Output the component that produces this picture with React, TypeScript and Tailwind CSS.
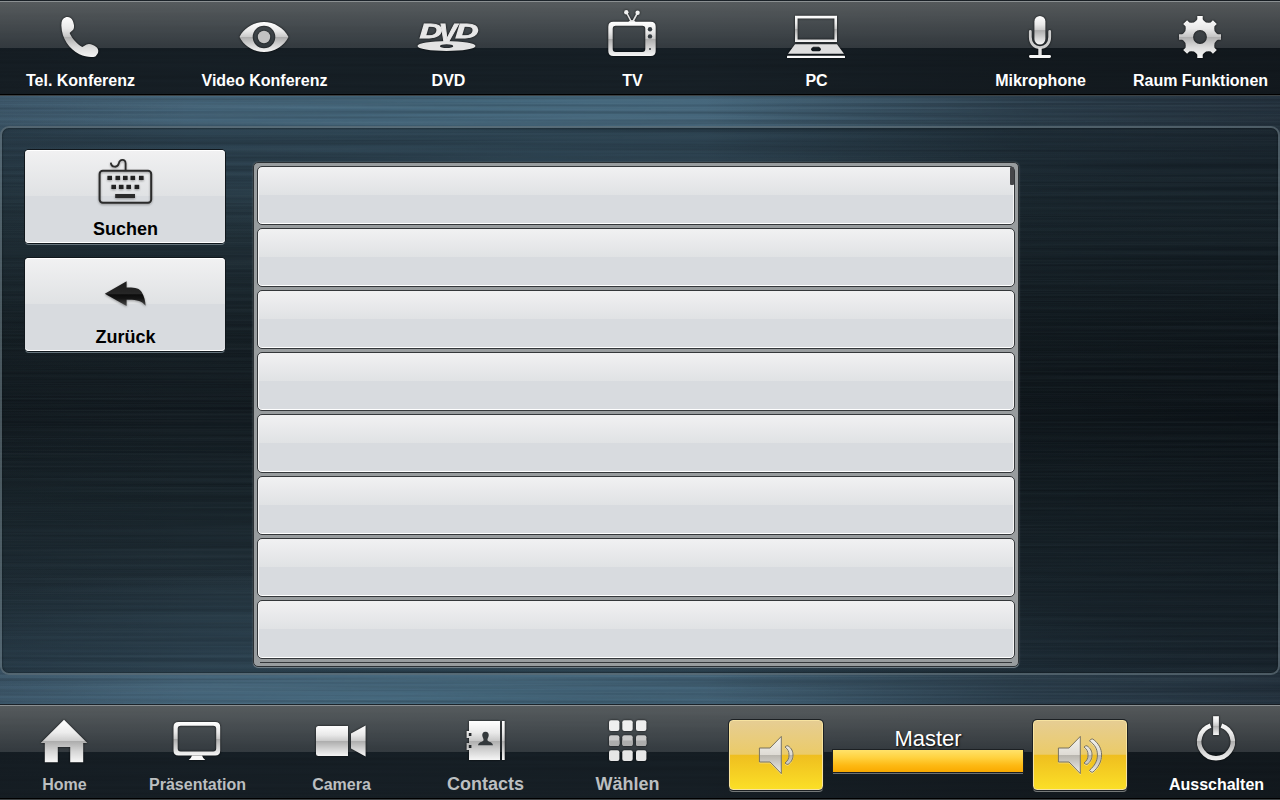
import type { ReactNode } from "react";

function Defs() {
  return (
    <svg className="absolute h-0 w-0" aria-hidden="true">
      <defs>
        <linearGradient id="metal" x1="0" y1="0" x2="0" y2="1">
          <stop offset="0" stopColor="#ffffff" />
          <stop offset="0.3" stopColor="#e9e9e9" />
          <stop offset="0.5" stopColor="#c9c9c9" />
          <stop offset="0.51" stopColor="#adadad" />
          <stop offset="0.75" stopColor="#d2d2d2" />
          <stop offset="1" stopColor="#f6f6f6" />
        </linearGradient>
        <linearGradient id="metalTop" gradientUnits="userSpaceOnUse" x1="0" y1="16" x2="0" y2="58">
          <stop offset="0" stopColor="#ffffff" />
          <stop offset="0.3" stopColor="#e9e9e9" />
          <stop offset="0.5" stopColor="#c4c4c4" />
          <stop offset="0.51" stopColor="#b0b0b0" />
          <stop offset="0.75" stopColor="#dcdcdc" />
          <stop offset="1" stopColor="#f6f6f6" />
        </linearGradient>
        <linearGradient id="metalLow" gradientUnits="userSpaceOnUse" x1="0" y1="720" x2="0" y2="762">
          <stop offset="0" stopColor="#ffffff" />
          <stop offset="0.3" stopColor="#ececec" />
          <stop offset="0.5" stopColor="#cccccc" />
          <stop offset="0.51" stopColor="#adadad" />
          <stop offset="0.75" stopColor="#d6d6d6" />
          <stop offset="1" stopColor="#f6f6f6" />
        </linearGradient>
        <linearGradient id="speaker" gradientUnits="userSpaceOnUse" x1="0" y1="736" x2="0" y2="774">
          <stop offset="0" stopColor="#f4f3f0" />
          <stop offset="0.5" stopColor="#dedbd4" />
          <stop offset="0.51" stopColor="#b9b6af" />
          <stop offset="1" stopColor="#efeeea" />
        </linearGradient>
        <linearGradient id="ink" x1="0" y1="0" x2="0" y2="1">
          <stop offset="0" stopColor="#1c1c1c" />
          <stop offset="0.5" stopColor="#262626" />
          <stop offset="0.55" stopColor="#0c0c0c" />
          <stop offset="0.7" stopColor="#151515" />
          <stop offset="1" stopColor="#4a4a4a" />
        </linearGradient>
      </defs>
    </svg>
  );
}

const navIcon = "block h-16 w-20 drop-shadow-[0_0_1px_rgba(0,0,0,0.8)]";

function PhoneIcon() {
  return (
    <svg viewBox="40 0 80 64" className={navIcon}>
      <path
        fill="url(#metalTop)"
        d="M65.2 17.4C68.3 16.2 71.3 17.4 72.6 20.4C74.2 24.2 74.6 27.4 73.2 29.8L69.6 33C72 38.6 76.6 43.6 82.3 47L86.6 44.6C89.4 43.2 93.6 44.8 96.8 47.6C99.2 50 98.6 53.8 95.4 56.4C91.6 57.6 85.4 57 79.4 54.2C69 48.8 61.8 38.6 61.4 26C61.2 21.2 62.4 18.4 65.2 17.4Z"
      />
    </svg>
  );
}

function EyeIcon() {
  return (
    <svg viewBox="224 0 80 64" className={navIcon}>
      <path
        fill="url(#metal)"
        fillRule="evenodd"
        d="M239.5 37C244 28 254 22 264 22C274 22 284 28 288.5 37C284 46 274 52 264 52C254 52 244 46 239.5 37ZM264 25.7A11.3 11.3 0 1 0 264 48.3A11.3 11.3 0 1 0 264 25.7Z"
      />
      <circle cx="264" cy="37" r="6.2" fill="#c2c2c2" />
    </svg>
  );
}

function DvdIcon() {
  return (
    <svg viewBox="408 0 80 64" className={navIcon}>
      <g fill="#e8e8e8" fontFamily="Liberation Sans, Arial, sans-serif" fontWeight="700" fontStyle="italic" stroke="#e8e8e8" strokeWidth="0.9">
        <text x="419.8" y="37.8" fontSize="20.5" textLength="22.5" lengthAdjust="spacingAndGlyphs">D</text>
        <text x="438.8" y="41.6" fontSize="25.5" textLength="18" lengthAdjust="spacingAndGlyphs">V</text>
        <text x="455.4" y="37.8" fontSize="20.5" textLength="23" lengthAdjust="spacingAndGlyphs">D</text>
      </g>
      <path
        fill="#e3e3e3"
        fillRule="evenodd"
        d="M417.5 46A29 5 0 1 1 475.5 46A29 5 0 1 1 417.5 46ZM440 46.2A6.6 1.9 0 1 0 453.2 46.2A6.6 1.9 0 1 0 440 46.2Z"
      />
    </svg>
  );
}

function TvIcon() {
  return (
    <svg viewBox="592 0 80 64" className={navIcon}>
      <path d="M632 23L626.5 12.5M632 23L637.5 13" stroke="#e4e4e4" strokeWidth="1.6" fill="none" />
      <circle cx="626.3" cy="12.2" r="2.2" fill="#f2f2f2" />
      <circle cx="637.6" cy="12.8" r="2.2" fill="#f2f2f2" />
      <path fill="#e4e4e4" d="M628 22.2Q632 18 636 22.2Z" />
      <path
        fill="url(#metal)"
        fillRule="evenodd"
        d="M613.3 21.7H650.7Q655.7 21.7 655.7 26.7V51Q655.7 56 650.7 56H613.3Q608.3 56 608.3 51V26.7Q608.3 21.7 613.3 21.7ZM615.7 25.7Q612.7 25.7 612.7 28.7V49Q612.7 52 615.7 52H642.3Q645.3 52 645.3 49V28.7Q645.3 25.7 642.3 25.7Z"
      />
      <circle cx="650" cy="29.2" r="2.2" fill="#353c41" />
      <circle cx="650" cy="36.4" r="2.2" fill="#353c41" />
      <circle cx="650" cy="49" r="1" fill="#353c41" />
    </svg>
  );
}

function LaptopIcon() {
  return (
    <svg viewBox="776 0 80 64" className={navIcon}>
      <path
        fill="url(#metal)"
        fillRule="evenodd"
        d="M795 15.8H837V42H795ZM797.6 18.4V39.4H834.4V18.4Z"
      />
      <path
        fill="#dedede"
        fillRule="evenodd"
        d="M795 44.3H837L844 53.7H788ZM813.3 46.7Q811 47.5 811 49.6Q811.4 51 812.6 51.2H819.4Q820.6 51 821 49.6Q821 47.5 818.7 46.7Z"
      />
      <rect x="787" y="55.7" width="58" height="2.3" rx="0.6" fill="#fafafa" />
    </svg>
  );
}

function MicIcon() {
  return (
    <svg viewBox="1000 0 80 64" className={navIcon}>
      <rect x="1034.4" y="16" width="11" height="28.5" rx="5.5" fill="url(#metal)" />
      <path
        d="M1030.3 31.5V37C1030.3 43.5 1034.5 47.6 1040 47.6C1045.5 47.6 1049.7 43.5 1049.7 37V31.5"
        fill="none"
        stroke="#cdcdcd"
        strokeWidth="2.8"
        strokeLinecap="round"
      />
      <path d="M1040 48V56" stroke="#e2e2e2" strokeWidth="3.4" />
      <rect x="1029" y="55" width="22" height="3" rx="1.4" fill="#f6f6f6" />
    </svg>
  );
}

function gearOutline(cx: number, cy: number) {
  const points: string[] = [];
  for (let i = 0; i < 8; i++) {
    const base = (i * Math.PI) / 4 - Math.PI / 2;
    const profile: [number, number][] = [
      [-0.23, 16.8],
      [-0.15, 18],
      [-0.13, 21.2],
      [0.13, 21.2],
      [0.15, 18],
      [0.23, 16.8],
      [0.39, 15.8],
    ];
    for (const [da, r] of profile) {
      points.push(`${(cx + r * Math.cos(base + da)).toFixed(2)} ${(cy + r * Math.sin(base + da)).toFixed(2)}`);
    }
  }
  return `M${points.join("L")}Z`;
}

function GearIcon() {
  return (
    <svg viewBox="1160 0 80 64" className={navIcon}>
      <path
        fill="url(#metalTop)"
        fillRule="evenodd"
        d={`${gearOutline(1200, 37)}M1200 30.1A6.9 6.9 0 1 0 1200 43.9A6.9 6.9 0 1 0 1200 30.1Z`}
      />
    </svg>
  );
}

function HomeIcon() {
  return (
    <svg viewBox="24 706 80 64" className={navIcon}>
      <path fill="url(#metalLow)" d="M64 719.7L87.3 743H83.2V762.3H70.2V747H57.8V762.3H44.8V743H40.7Z" />
    </svg>
  );
}

function MonitorIcon() {
  return (
    <svg viewBox="157 706 80 64" className={navIcon}>
      <path
        fill="url(#metal)"
        fillRule="evenodd"
        d="M178.5 722H215.2Q220.2 722 220.2 727V750.6Q220.2 755.6 215.2 755.6H178.5Q173.5 755.6 173.5 750.6V727Q173.5 722 178.5 722ZM180.7 725.8Q177.7 725.8 177.7 728.8V748.6Q177.7 751.6 180.7 751.6H213.2Q216.2 751.6 216.2 748.6V728.8Q216.2 725.8 213.2 725.8Z"
      />
      <path fill="#f8f8f8" d="M192 755.4H202Q203 758.5 205.3 760H188.7Q191 758.5 192 755.4Z" />
    </svg>
  );
}

function CameraIcon() {
  return (
    <svg viewBox="301 706 80 64" className={navIcon}>
      <path
        fill="url(#metal)"
        d="M318.5 726H348V756H318.5Q316 756 316 753.5V728.5Q316 726 318.5 726ZM351 733.4L365.6 725.6V756.4L351 748.4Z"
      />
    </svg>
  );
}

function ContactsIcon() {
  return (
    <svg viewBox="445 706 80 64" className={navIcon}>
      <path
        fill="url(#metal)"
        fillRule="evenodd"
        d="M469 721H500V760H469V750H466.6V743H469V738H466.6V731H469ZM468.8 733V736H471.4V733ZM468.8 745V748H471.4V745Z"
      />
      <rect x="502" y="721" width="2.7" height="39" fill="url(#metal)" />
      <path
        fill="#34393c"
        d="M485.5 731.8C488 731.8 489 733.6 488.7 735.8C488.5 737.4 487.6 738.2 487.4 740C488 742 492.4 741.8 493 745.2H478C478.6 741.8 483 742 483.6 740C483.4 738.2 482.5 737.4 482.3 735.8C482 733.6 483 731.8 485.5 731.8Z"
      />
    </svg>
  );
}

function KeypadIcon() {
  return (
    <svg viewBox="587 706 80 64" className={navIcon}>
      {[609, 622.3, 636].map((x) => (
        <g key={x}>
          <rect x={x} y="720.3" width="10.4" height="10.6" rx="2" fill="#efefef" />
          <rect x={x} y="735.3" width="10.4" height="10.6" rx="2" fill="#c9c9c9" />
          <path d={`M${x} 740.6h10.4v3.3q0 2 -2 2h-6.4q-2 0 -2 -2z`} fill="#acacac" />
          <rect x={x} y="750.3" width="10.4" height="10.6" rx="2" fill="#e6e6e6" />
        </g>
      ))}
    </svg>
  );
}

function PowerIcon() {
  return (
    <svg viewBox="1176 706 80 64" className={navIcon}>
      <path
        fill="none"
        stroke="url(#metalLow)"
        strokeWidth="4.6"
        d="M1210.6 725.6A16.8 16.8 0 1 0 1221.4 725.6"
      />
      <rect x="1213.1" y="716.2" width="5.8" height="18.8" fill="url(#metal)" />
    </svg>
  );
}

function SpeakerIcon({ loud }: { loud?: boolean }) {
  return (
    <svg
      viewBox={loud ? "1034 721 92 68" : "730 721 92 68"}
      className="block h-[68px] w-[92px] drop-shadow-[0_1px_0_rgba(255,255,255,0.35)]"
    >
      <g transform={loud ? "translate(299 0)" : undefined} stroke="#77715f" strokeWidth="1" fill="url(#speaker)">
        <path d="M759.4 748H770L781.3 736.4V773.6L770 762H759.4Z" />
        <path d="M785 747Q787 745.2 788 745.8C791.8 748.4 793 751.4 793 755C793 758.6 791.8 761.8 788 764.4Q786.8 764.6 785 763C788 760.6 789 758.4 789 755C789 751.6 788 749.4 785 747Z" />
        {loud && (
          <path d="M790.4 740.8Q792.2 738.6 793.8 739C799.6 743.2 802.6 748.6 802.6 755C802.6 761.4 799.6 767.2 793.8 772.2Q792 772.6 790.4 770.4C795.8 765.6 798.4 761 798.4 755C798.4 749 795.8 744.6 790.4 740.8Z" />
        )}
      </g>
    </svg>
  );
}

function KeyboardIcon() {
  return (
    <svg viewBox="95 154 60 54" className="block h-[54px] w-[60px] drop-shadow-[0_1px_1px_rgba(0,0,0,0.35)]">
      <path
        fill="none"
        stroke="#2b2b2b"
        strokeWidth="1.8"
        d="M110.8 162.6C111.2 167.6 117.6 168.2 118.8 163.6C119.6 158.8 125.6 158.4 125.6 163.4V170"
      />
      <rect x="99.6" y="170.8" width="51.6" height="32" rx="3.2" fill="none" stroke="#2b2b2b" strokeWidth="2" />
      {[107.4, 115.5, 123, 130.5, 139].map((x) => (
        <rect key={x} x={x} y="175.8" width="4.6" height="4.2" fill="#222" />
      ))}
      {[111.4, 118.9, 126.4, 134.6].map((x) => (
        <rect key={x} x={x} y="184.8" width="4.6" height="4.2" fill="#222" />
      ))}
      <rect x="115.2" y="194" width="19.8" height="4" fill="#2b2b2b" />
    </svg>
  );
}

function BackIcon() {
  return (
    <svg viewBox="95 262 60 54" className="block h-[54px] w-[60px] drop-shadow-[0_1px_1px_rgba(0,0,0,0.35)]">
      <path
        fill="url(#ink)"
        d="M104.8 293.8L126.6 281.2V287.6C135 287.4 139.5 288.4 141.8 292.2C144.2 296.6 145.4 300.8 145.6 305.8C141.6 300.6 136.6 299.6 126.6 299.8V306Z"
      />
    </svg>
  );
}

function BrushedMetal() {
  return (
    <svg className="pointer-events-none absolute inset-0 h-full w-full" viewBox="0 0 1280 800" aria-hidden="true">
      <filter id="brush" x="0" y="0" width="100%" height="100%" colorInterpolationFilters="sRGB">
        <feTurbulence type="fractalNoise" baseFrequency="0.002 0.6" numOctaves="2" seed="7" />
        <feColorMatrix values="0 0 0 0 0.5  0 0 0 0 0.6  0 0 0 0 0.64  1.6 0 0 0 -0.6" />
      </filter>
      <filter id="brushDark" x="0" y="0" width="100%" height="100%" colorInterpolationFilters="sRGB">
        <feTurbulence type="fractalNoise" baseFrequency="0.002 0.28" numOctaves="2" seed="21" />
        <feColorMatrix values="0 0 0 0 0  0 0 0 0 0.01  0 0 0 0 0.03  2 0 0 0 -0.7" />
      </filter>
      <rect width="1280" height="800" filter="url(#brush)" opacity="0.15" />
      <rect width="1280" height="800" filter="url(#brushDark)" opacity="0.22" />
    </svg>
  );
}

const barSurface =
  "bg-[linear-gradient(180deg,rgba(20,24,28,0.85)_0,rgba(20,24,28,0.85)_1px,#8b9092_1px,#8b9092_2px,rgba(88,91,92,0.92)_2px,rgba(50,55,59,0.93)_48px,rgba(14,19,23,0.86)_48px,rgba(15,20,24,0.86)_94px,#000_94px,#000_95px,#3c4143_95px)]";

const glossy =
  "bg-[linear-gradient(180deg,#f1f1f2_0%,#e0e2e4_49%,#d8dbdf_50%,#d8dbdf_100%)]";

function NavItem({
  label,
  className,
  labelClass,
  children,
}: {
  label: string;
  className: string;
  labelClass: string;
  children: ReactNode;
}) {
  return (
    <button className={`flex shrink-0 flex-col items-center whitespace-nowrap font-bold ${className}`}>
      {children}
      <span className={`pl-px ${labelClass}`}>{label}</span>
    </button>
  );
}

function SideButton({ label, children }: { label: string; children: ReactNode }) {
  return (
    <button
      className={`flex h-[93px] w-[200px] flex-col items-center rounded-[4px] pt-1 text-[18px] leading-[22px] font-bold text-black shadow-[inset_0_1px_0_#fff,inset_0_-1px_0_#fff,0_0_0_1px_#10171c,0_2px_0_#65737b] ${glossy}`}
    >
      {children}
      <span className="mt-[10px] pl-px">{label}</span>
    </button>
  );
}

const yellowButton =
  "h-[70px] w-[94px] shrink-0 rounded-[4px] border border-[#f7e3a0] bg-[linear-gradient(180deg,#e6cd93_0%,#ebcb68_49%,#efbe1f_50%,#fbdf27_100%)] shadow-[0_0_0_1px_#1c2023,0_2px_0_#747878]";

export default function App() {
  return (
    <div className="relative flex h-[800px] w-[1280px] flex-col overflow-hidden bg-[radial-gradient(ellipse_820px_150px_at_480px_90px,#466a7f_0%,rgba(70,103,124,0.8)_45%,rgba(60,90,110,0)_100%),radial-gradient(ellipse_820px_150px_at_480px_712px,#466a7f_0%,rgba(70,103,124,0.8)_45%,rgba(60,90,110,0)_100%),linear-gradient(180deg,#435b70_0%,#435b70_13%,#344a56_25%,#1b262c_42%,#161f25_52%,#202e35_62%,#324653_78%,#435c72_88%,#435c72_100%)] font-['Liberation_Sans',Arial,sans-serif]">
      <div className="pointer-events-none absolute inset-0 bg-[linear-gradient(90deg,rgba(10,16,20,0.1)_0%,transparent_15%,transparent_55%,rgba(10,16,20,0.42)_80%,rgba(8,12,16,0.52)_100%)]" />
      <BrushedMetal />
      <Defs />

      <header className={`relative flex h-24 shrink-0 text-[16px] leading-[20px] text-white [text-shadow:1px_2px_2px_rgba(0,0,0,0.9)] ${barSurface}`}>
        <nav className="flex gap-6">
          <NavItem label="Tel. Konferenz" className="w-40" labelClass="mt-[7px]"><PhoneIcon /></NavItem>
          <NavItem label="Video Konferenz" className="w-40" labelClass="mt-[7px]"><EyeIcon /></NavItem>
          <NavItem label="DVD" className="w-40" labelClass="mt-[7px]"><DvdIcon /></NavItem>
          <NavItem label="TV" className="w-40" labelClass="mt-[7px]"><TvIcon /></NavItem>
          <NavItem label="PC" className="w-40" labelClass="mt-[7px]"><LaptopIcon /></NavItem>
        </nav>
        <nav className="ml-auto flex">
          <NavItem label="Mikrophone" className="w-40" labelClass="mt-[7px]"><MicIcon /></NavItem>
          <NavItem label="Raum Funktionen" className="w-40" labelClass="mt-[7px]"><GearIcon /></NavItem>
        </nav>
      </header>

      <main className="relative mt-[30px] flex h-[549px] shrink-0 rounded-[9px] border-2 border-[#8b9fa8]/45 bg-[linear-gradient(180deg,rgba(13,22,28,0.42),rgba(10,16,20,0.28)_50%,rgba(13,22,28,0.42))] pt-[22px] pl-[23px] shadow-[inset_0_0_2px_#0c1317]">
        <div className="flex flex-col gap-[15px]">
          <SideButton label="Suchen"><KeyboardIcon /></SideButton>
          <SideButton label="Zurück"><BackIcon /></SideButton>
        </div>

        <div className="relative mt-3 ml-7 flex h-[505px] w-[766px] flex-col gap-[3px] overflow-hidden rounded-[5px] border border-[#2b3034] bg-[#989c9e] px-[3px] pt-[3px] shadow-[0_1px_0_#6e7d86,0_0_2px_#5f6a70]">
          {Array.from({ length: 8 }, (_, i) => (
            <div
              key={i}
              className={`h-[59px] shrink-0 rounded-[5px] border border-[#34373a] shadow-[inset_0_-1px_0_#fff,inset_1px_0_0_#f6f6f6,inset_-1px_0_0_#f6f6f6] ${glossy}`}
            />
          ))}
          <div className="mx-[3px] h-px shrink-0 bg-[#34373a]" />
          <div className="absolute top-1 right-[4px] h-[18px] w-1 rounded-[1px] bg-[#454649]" />
        </div>
      </main>

      <footer className={`relative mt-[29px] flex h-24 shrink-0 text-[16px] leading-[20px] text-[#bcbfc0] [text-shadow:1px_1px_2px_rgba(0,0,0,0.9)] ${barSurface}`}>
        <NavItem label="Home" className="w-32 pt-0.5" labelClass="mt-[5px]"><HomeIcon /></NavItem>
        <NavItem label="Präsentation" className="w-[138px] pt-0.5" labelClass="mt-[5px]"><MonitorIcon /></NavItem>
        <NavItem label="Camera" className="w-[150px] pt-0.5" labelClass="mt-[5px]"><CameraIcon /></NavItem>
        <NavItem label="Contacts" className="w-[138px] pt-0.5" labelClass="mt-1 text-[18px]"><ContactsIcon /></NavItem>
        <NavItem label="Wählen" className="w-[146px] pt-0.5" labelClass="mt-1 text-[18px]"><KeypadIcon /></NavItem>

        <div className="ml-[29px] flex items-start gap-2.5 pt-4">
          <button className={yellowButton}><SpeakerIcon /></button>
          <div className="flex w-[190px] flex-col pt-[7px] text-center text-[22px] leading-[23px] text-white">
            Master
            <div className="h-[22px] bg-[linear-gradient(180deg,#ffe26a_0%,#ffd23f_35%,#fdb913_70%,#f9a900_100%)] shadow-[0_0_0_1px_#1c2023,0_2px_0_#6c7072]" />
          </div>
          <button className={yellowButton}><SpeakerIcon loud /></button>
        </div>

        <NavItem label="Ausschalten" className="ml-auto w-32 pt-0.5 text-white" labelClass="mt-[5px]"><PowerIcon /></NavItem>
      </footer>
    </div>
  );
}
